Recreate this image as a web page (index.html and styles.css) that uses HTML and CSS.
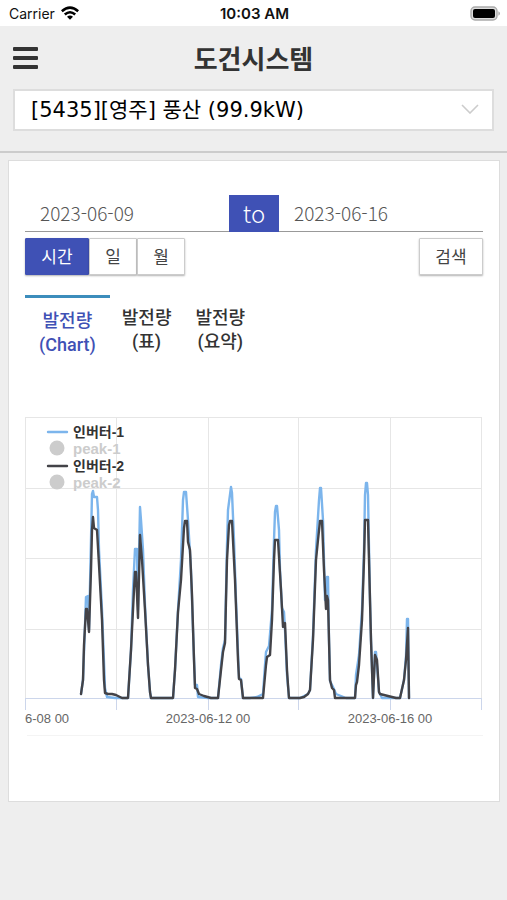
FILE: index.html
```
<!DOCTYPE html>
<html lang="ko">
<head>
  <meta charset="UTF-8">
  <meta name="viewport" content="width=device-width, initial-scale=1.0">
  <title>도건시스템</title>
  <link rel="stylesheet" href="styles.css">
</head>
<body>
  <div class="status-bar">
    <div class="carrier">
      <span>Carrier</span>
      <svg width="18" height="14" viewBox="0 0 18 14" fill="none" stroke="#000" stroke-width="2.6">
        <path d="M.8 5.2Q9 -2 17.2 5.2"/>
        <path d="M3.8 8.5Q9 4 14.2 8.5"/>
        <path d="M9 13.8L6 10.8Q9 8.4 12 10.8Z" fill="#000" stroke="none"/>
      </svg>
    </div>
    <span class="clock">10:03 AM</span>
    <svg class="battery" width="30" height="15" viewBox="0 0 30 15">
      <rect x="1" y="1" width="26" height="13" rx="4" fill="#ddd" stroke="#aaa" stroke-width="1.4"/>
      <rect x="3" y="3" width="22" height="9" rx="2" fill="#000"/>
      <path d="M28.4 5.2q1.6 .8 1.6 2.3t-1.6 2.3z" fill="#aaa"/>
    </svg>
  </div>

  <header>
    <div class="title-row">
      <button class="menu" type="button" aria-label="메뉴">
        <svg width="25" height="22" viewBox="0 0 25 22" fill="#333">
          <rect y="0" width="25" height="4" rx="1"/>
          <rect y="9" width="25" height="4" rx="1"/>
          <rect y="18" width="25" height="4" rx="1"/>
        </svg>
      </button>
      <h1>도건시스템</h1>
    </div>
    <div class="plant">
      <select aria-label="발전소">
        <option>[5435][영주] 풍산 (99.9kW)</option>
      </select>
      <svg class="arrow" width="18" height="10" viewBox="0 0 18 10" fill="none" stroke="#ccc" stroke-width="1.6">
        <path d="M1 1l8 8 8-8"/>
      </svg>
    </div>
  </header>

  <main class="card">
    <div class="dates">
      <input type="text" value="2023-06-09" aria-label="시작일">
      <span class="to">to</span>
      <input type="text" value="2023-06-16" aria-label="종료일">
    </div>

    <div class="tools">
      <div class="units">
        <button class="btn wide active" type="button">시간</button>
        <button class="btn" type="button">일</button>
        <button class="btn" type="button">월</button>
      </div>
      <button class="btn wide" type="button">검색</button>
    </div>

    <nav class="tabs">
      <a href="#chart" class="active">발전량<br>(Chart)</a>
      <a href="#table">발전량<br>(표)</a>
      <a href="#summary">발전량<br>(요약)</a>
    </nav>

    <svg class="chart" id="chart" viewBox="25 416 458 320">
      <g class="grid">
        <path d="M26 417.5H482M26 488.5H482M26 558.5H482M26 629.5H482"/>
        <path d="M25.5 417V698M116.5 417V698M208.5 417V698M298.5 417V698M390.5 417V698M481.5 417V698"/>
      </g>
      <path class="axis" d="M25 698.5H482M25.5 698V710M116.5 698V710M208.5 698V710M298.5 698V710M390.5 698V710M481.5 698V710"/>

      <path class="line blue" d="M81 694L83 680 85 625 86 597 88 596 89 630 91 540 92 494 93 491 94 497 97 497 98 510 99 550 102 610 105 688 107 697 115 698 128 698 131 650 133 590 135 549 137 549 138 610 140 507 141 520 143 550 145 605 148 665 150 692 151 698 173 698 175 670 178 610 181 560 183 500 184 492 186 492 188 520 191 570 193 630 195 685 197 685 198 697 208 698 218 698 221 665 223 648 225 640 227 545 228 510 231 487 232 493 234 540 236 600 239 678 241 679 243 698 250 698 257 697 263 694 265 665 266 652 269 646 272 610 274 540 275 512 276 506 277 506 279 530 280 570 282 608 284 612 285 630 287 675 289 698 300 698 308 694 310 690 313 635 316 550 319 500 320 488 321 488 323 520 325 600 327 577 328 577 329 640 330 681 333 687 336 694 346 698 355 698 356 675 359 655 362 610 364 550 365 495 366 483 367 483 368 495 370 600 371 640 373 698 375 652 376 652 379 692 382 698 400 698 404 680 406 656 407 619 408 619 409 698"/>
      <path class="line dark" d="M81 694L83 680 84 645 86 609 87 609 89 632 91 570 92 530 93 517 94 528 97 530 99 565 102 620 104 680 105 693 108 694 112 694 116 695 122 698 128 698 131 650 134 590 135 572 136 572 138 618 140 535 142 560 145 610 148 665 150 692 151 698 173 698 175 670 178 612 181 580 184 528 185 521 187 521 188 542 190 550 192 595 194 660 195 688 197 689 199 694 204 696 211 698 218 698 221 670 223 652 225 643 226 600 227 560 229 525 230 521 232 521 235 580 238 660 239 679 241 680 243 698 263 698 266 665 267 657 270 655 272 620 274 560 275 540 278 540 281 590 283 627 285 623 287 670 288 685 289 698 300 698 304 697 308 694 310 690 313 640 316 560 318 540 320 521 322 521 324 570 326 609 327 596 328 600 330 680 332 688 334 690 335 698 355 698 356 685 357 682 359 665 362 620 364 560 365 520 368 520 370 600 371 640 373 698 375 655 377 660 379 692 380 694 388 696 396 698 400 698 404 680 406 660 408 628 409 698"/>

      <g class="legend">
        <path class="line blue" d="M48 432H67"/>
        <text x="73" y="437">인버터-1</text>
        <g class="off">
          <circle cx="57" cy="448" r="7.5"/>
          <text x="73" y="454">peak-1</text>
        </g>
        <path class="line dark" d="M48 466H67"/>
        <text x="73" y="471">인버터-2</text>
        <g class="off">
          <circle cx="57" cy="482" r="7.5"/>
          <text x="73" y="488">peak-2</text>
        </g>
      </g>

      <g class="labels">
        <text x="25" y="723">6-08 00</text>
        <text x="208" y="723" text-anchor="middle">2023-06-12 00</text>
        <text x="390" y="723" text-anchor="middle">2023-06-16 00</text>
      </g>
      <path class="bottom" d="M27 735.5H483"/>
    </svg>
  </main>
</body>
</html>
```
FILE: styles.css
```
* {
  box-sizing: border-box;
}
body {
  margin: 0;
  background: #eee;
  color: #333;
  font-family: "Noto Sans CJK KR", sans-serif;
}
button, input, select {
  font-family: inherit;
  color: inherit;
}

.status-bar {
  display: grid;
  grid-template-columns: 1fr auto 1fr;
  align-items: center;
  height: 26px;
  padding: 0 7px 0 9px;
  background: #fff;
  color: #111;
  font-family: Inter, sans-serif;
  font-size: 14px;
}
.carrier {
  display: flex;
  align-items: center;
  gap: 6px;
}
.clock {
  font-size: 15px;
  font-weight: 600;
}
.battery {
  justify-self: end;
}

header {
  padding: 0 13px 20px;
  border-bottom: 2px solid #ccc;
}
.title-row {
  display: grid;
  grid-template-columns: 1fr auto 1fr;
  align-items: center;
  height: 63px;
}
.menu {
  width: 25px;
  height: 22px;
  padding: 0;
  border: none;
  background: none;
  cursor: pointer;
}
.menu svg {
  display: block;
}
h1 {
  margin: 0;
  font-size: 26px;
  font-weight: 700;
  line-height: 34px;
}
.plant {
  position: relative;
}
.plant select {
  appearance: none;
  display: block;
  width: 100%;
  height: 42px;
  padding: 0 40px 0 16px;
  border: 2px solid #ddd;
  border-radius: 0;
  background: #fff;
  color: #000;
  font-family: "DejaVu Sans", "Noto Sans CJK KR", sans-serif;
  font-size: 21px;
}
.arrow {
  position: absolute;
  top: 15px;
  right: 15px;
  pointer-events: none;
}

.card {
  margin: 7px 7px 0 8px;
  padding: 34px 16px 65px;
  border: 1px solid #ddd;
  background: #fff;
}

.dates {
  display: flex;
  height: 37px;
  border-bottom: 1px solid #999;
}
.dates input {
  flex: 1;
  min-width: 0;
  padding: 0 15px 2px;
  border: none;
  background: none;
  color: #555;
  font-size: 19px;
  font-weight: 300;
}
.to {
  width: 50px;
  height: 37px;
  background: #3f51b5;
  color: #fff;
  font-size: 24px;
  font-weight: 300;
  line-height: 36px;
  text-align: center;
}

.tools {
  display: flex;
  justify-content: space-between;
  margin-top: 6px;
}
.units {
  display: flex;
}
.btn {
  width: 48px;
  height: 37px;
  padding: 0 0 2px;
  border: 1px solid #ccc;
  border-radius: 1px;
  background: #fff;
  box-shadow: 0 1px 2px rgba(0, 0, 0, 0.3);
  color: #444;
  font-size: 17px;
  cursor: pointer;
}
.btn.wide {
  width: 64px;
}
.btn.active {
  border-color: #3f51b5;
  background: #3f51b5;
  color: #fff;
}

.tabs {
  display: flex;
  margin-top: 20px;
}
.tabs a {
  padding: 11px 12px 9px;
  color: #333;
  font-family: Roboto, "Noto Sans CJK KR", sans-serif;
  font-size: 18px;
  font-weight: 500;
  line-height: 24px;
  text-align: center;
  text-decoration: none;
}
.tabs .active {
  padding: 11px 14px 9px;
  border-top: 3px solid #3c8dbc;
  color: #3f51b5;
}

.chart {
  display: block;
  width: 100%;
  margin-top: 50px;
}
.grid path {
  stroke: #e6e6e6;
}
.axis {
  fill: none;
  stroke: #ccd6eb;
}
.bottom {
  stroke: #f4f4f4;
}
.line {
  fill: none;
  stroke-width: 2.4;
  stroke-linejoin: round;
  stroke-linecap: round;
}
.blue {
  stroke: #7cb5ec;
}
.dark {
  stroke: #434348;
}
.legend text {
  fill: #333;
  font-family: "Liberation Sans", "Noto Sans CJK KR", sans-serif;
  font-size: 14px;
  font-weight: 700;
}
.legend .off circle, .legend .off text {
  fill: #ccc;
}
.legend .off text {
  font-size: 15px;
}
.labels text {
  fill: #666;
  font-family: "Liberation Sans", sans-serif;
  font-size: 13px;
}
```
